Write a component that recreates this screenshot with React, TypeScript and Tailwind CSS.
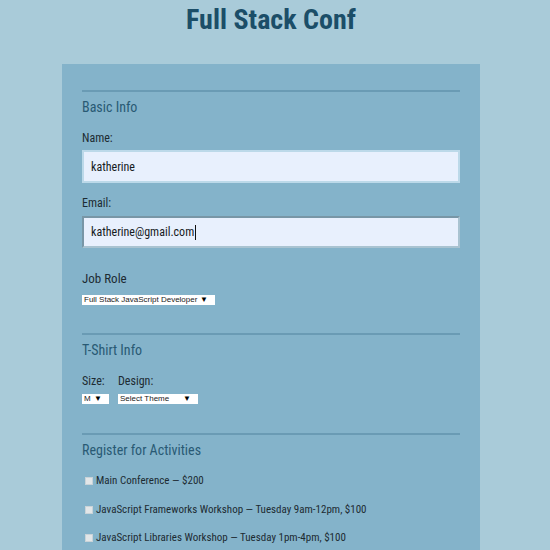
const font = "font-['Roboto','Noto_Sans',sans-serif] [font-stretch:condensed]";

function Rule() {
  return <div className="h-[2px] bg-[#6a9bb4]" />;
}

function Heading({ children }: { children: string }) {
  return (
    <h2 className="mt-[5px] text-[14px] leading-[20px] font-normal text-[#295a74]">
      {children}
    </h2>
  );
}

function Label({ children, className = "" }: { children: string; className?: string }) {
  return (
    <span className={`block text-[12px] leading-[16px] text-[#1d2b32] ${className}`}>
      {children}
    </span>
  );
}

function FakeSelect({ text, width }: { text: string; width: string }) {
  return (
    <span
      className={`flex h-[10px] items-center justify-between whitespace-nowrap bg-white pl-[2px] pr-[7px] font-['Liberation_Sans',Arial,sans-serif] text-[8px] leading-[10px] text-[#222] [font-stretch:normal] ${width}`}
    >
      <span>{text}</span>
      <span className="text-[8px] text-black">▼</span>
    </span>
  );
}

const activities = [
  "Main Conference — $200",
  "JavaScript Frameworks Workshop — Tuesday 9am-12pm, $100",
  "JavaScript Libraries Workshop — Tuesday 1pm-4pm, $100",
];

export default function App() {
  return (
    <div className={`min-h-[550px] h-[550px] overflow-hidden bg-[#a9cbd9] ${font}`}>
      <div className="w-[542px]">
        <h1 className="pt-[3px] text-center text-[28px] leading-[34px] font-bold text-[#1b4e68]">
          Full Stack Conf
        </h1>

        <form className="mx-auto mt-[27px] w-[418px] bg-[#84b3ca] px-[20px] pt-[26px] pb-10">
          {/* Basic info */}
          <Rule />
          <Heading>Basic Info</Heading>
          <Label className="mt-[13px]">Name:</Label>
          <div className="mt-[4px] flex h-[33px] items-center border-2 border-[#bcd9e9] bg-[#e8f0fd] px-[7px] text-[12px] text-[#161b1e]">
            katherine
          </div>
          <Label className="mt-[12px]">Email:</Label>
          <div className="mt-[5px] flex h-[32px] items-center border-2 border-t-[#7896a6] border-l-[#7896a6] border-r-[#a9c3d1] border-b-[#a9c3d1] bg-[#e8f0fd] px-[7px] text-[12px] text-[#161b1e]">
            katherine@gmail.com
            <span className="ml-[1px] h-[15px] w-px bg-[#111]" />
          </div>
          <span className="mt-[23px] block text-[13px] leading-[16px] text-[#1d2b32]">
            Job Role
          </span>
          <div className="mt-[8px]">
            <FakeSelect text="Full Stack JavaScript Developer" width="w-[133px]" />
          </div>

          {/* T-shirt */}
          <div className="mt-[28px]">
            <Rule />
          </div>
          <Heading>T-Shirt Info</Heading>
          <div className="mt-[13px] flex gap-[9px]">
            <div className="flex flex-col gap-[5px]">
              <Label>Size:</Label>
              <FakeSelect text="M" width="w-[27px]" />
            </div>
            <div className="flex flex-col gap-[5px]">
              <Label>Design:</Label>
              <FakeSelect text="Select Theme" width="w-[80px]" />
            </div>
          </div>

          {/* Activities */}
          <div className="mt-[29px]">
            <Rule />
          </div>
          <Heading>Register for Activities</Heading>
          <div className="mt-[13px] flex flex-col gap-[12.5px]">
            {activities.map((a) => (
              <label key={a} className="flex items-center gap-[3px] text-[11px] leading-[16px] text-[#1d2b32]">
                <span className="ml-[3px] h-[8px] w-[8px] border border-[#c9d3d8] bg-[#e2e6e8]" />
                {a}
              </label>
            ))}
          </div>
        </form>
      </div>
    </div>
  );
}
